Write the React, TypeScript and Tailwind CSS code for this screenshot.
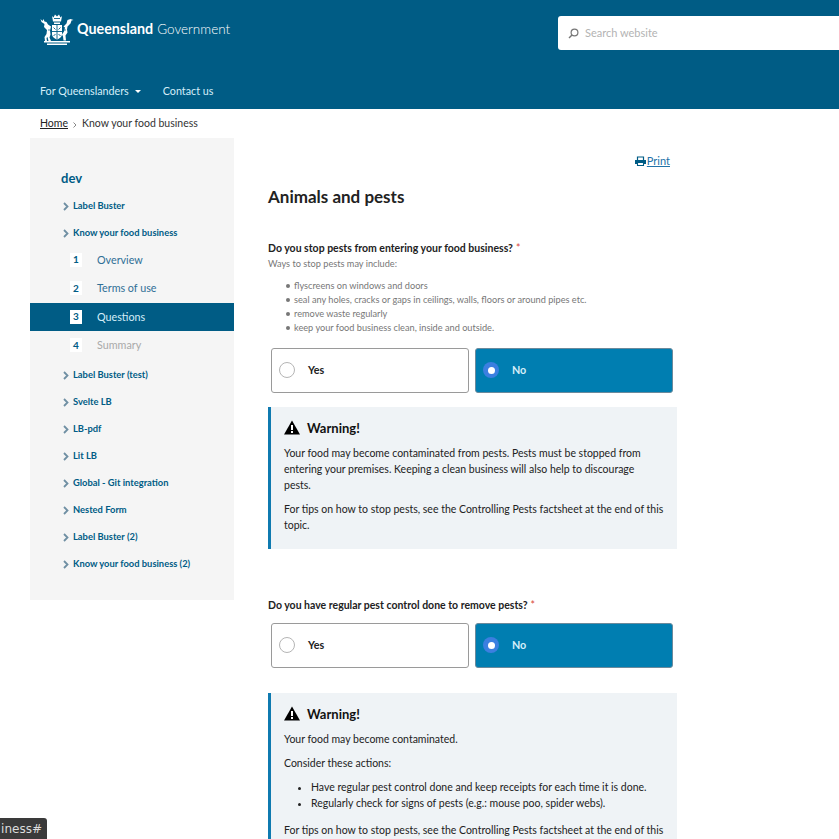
const sideTop = ["Label Buster", "Know your food business"];
const sideBottom = [
  "Label Buster (test)",
  "Svelte LB",
  "LB-pdf",
  "Lit LB",
  "Global - Git integration",
  "Nested Form",
  "Label Buster (2)",
  "Know your food business (2)",
];
const pestTips = [
  "flyscreens on windows and doors",
  "seal any holes, cracks or gaps in ceilings, walls, floors or around pipes etc.",
  "remove waste regularly",
  "keep your food business clean, inside and outside.",
];

function Crest() {
  return (
    <svg width="34" height="33" viewBox="0 0 34 33" fill="none" className="shrink-0">
      <g fill="#fff">
        {/* stag and brolga either side of the shield */}
        <path d="M0.500 6l2 2 1-2 1 2.500 2 .5 1.500 2.500 3 2-1 4 .5 4-1 3 1.500 3.500H8.500l-1-4-1 1 .5 3H5l-.5-4 2-3 .5-4-3-3 .5-3-3-2z" />
        <path d="M33.500 7l-2 .5-1 3-3 3-.5 3 .5 3-2 3 .500 5h-2.500l-.5-4-1-2 2-3 1-4-1.500-1 3-3 1-3.500 3-1z" />
        {/* shield */}
        <path d="M12 12h10v9c0 3-2.500 4.500-5 5.500-2.500-1-5-2.500-5-5.500z" />
        {/* scroll */}
        <path d="M4 28h26v1.500H4zM7 30.500h20V32H7z" />
        {/* crown */}
        <path d="M12 3l1.500 1.500L15 1.500l2 2 2-2 1.500 3L22 3l-1 5.500h-8zM14 9.500h6V11h-6z" />
      </g>
      <g stroke="#005c85" strokeWidth="0.9">
        <path d="M17 12v14M12 18.500h10" />
        <path d="M13.500 14.500l2 2M20.500 14.500l-2 2M13.500 23l2-2M20.500 23l-2-2" />
        <path d="M14 5.500h6" />
      </g>
      <g fill="#005c85">
        <circle cx="9" cy="17" r="0.7" />
        <circle cx="25" cy="17" r="0.7" />
      </g>
    </svg>
  );
}

function SideLink({ label }: { label: string }) {
  return (
    <div className="flex h-[27px] items-center pl-[33px]">
      <svg width="6" height="9" viewBox="0 0 6 9" className="mr-[4px] shrink-0">
        <path d="M1 1l3.500 3.500L1 8" stroke="#6f8fa3" strokeWidth="1.800" fill="none" />
      </svg>
      <span className="text-[9.35px] font-bold text-[#005c85]">{label}</span>
    </div>
  );
}

function Step({ n, label, state }: { n: number; label: string; state?: "active" | "off" }) {
  const active = state === "active";
  const off = state === "off";
  return (
    <div className={`flex h-[28.5px] items-center pl-[40px] ${active ? "bg-[#005c85]" : ""}`}>
      <span className="flex h-[14px] w-[12px] items-center justify-center bg-white text-[10px] font-bold text-[#005c85]">
        {n}
      </span>
      <span
        className={`ml-[15px] text-[10.75px] ${active ? "text-[#d5eef9]" : off ? "text-[#a9a9a9]" : "text-[#2f6f96]"}`}
      >
        {label}
      </span>
    </div>
  );
}

function Choice({ label, on }: { label: string; on?: boolean }) {
  return (
    <div
      className={`flex h-[45px] flex-1 items-center rounded-[3px] border pl-[7px] ${
        on ? "border-[#6b8a9c] bg-[#007eb1]" : "border-[#9a9a9a] bg-white"
      }`}
    >
      {on ? (
        <span className="flex h-[16px] w-[16px] items-center justify-center rounded-full bg-[#3b7fe0]">
          <span className="h-[7px] w-[7px] rounded-full bg-white" />
        </span>
      ) : (
        <span className="h-[16px] w-[16px] rounded-full border border-[#b5b5b5] bg-white" />
      )}
      <span className={`ml-[13px] mt-[1px] text-[10.75px] font-bold ${on ? "text-[#d5eef9]" : "text-[#222]"}`}>
        {label}
      </span>
    </div>
  );
}

function Question({ text }: { text: string }) {
  return (
    <p className="text-[10.5px] font-bold leading-[16px] text-[#222]">
      {text}
      <span className="ml-[3px] font-normal text-[#d9483b]">*</span>
    </p>
  );
}

function WarnTitle() {
  return (
    <div className="flex h-[16px] items-center gap-[7px]">
      <svg width="16" height="15" viewBox="0 0 16 15" className="shrink-0">
        <path d="M8 0.500L16 14.500H0z" fill="#000" />
        <rect x="7" y="5" width="2" height="5" fill="#fff" />
        <rect x="7" y="11" width="2" height="2" fill="#fff" />
      </svg>
      <span className="text-[13px] font-bold text-[#111]">Warning!</span>
    </div>
  );
}

export default function App() {
  return (
    <div className="relative h-[839px] overflow-hidden bg-white font-['Lato',sans-serif]">
      <header className="h-[109px] bg-[#005c85]">
        <div className="flex h-[66px] items-start justify-between pl-[40px]">
          <div className="mt-[13px] flex items-center">
            <Crest />
            <span className="mb-[3px] ml-[3px] text-white">
              <b className="text-[14.3px] font-bold">Queensland</b>{" "}
              <span className="text-[13.5px] font-light">Government</span>
            </span>
          </div>
          <div className="mt-[16px] flex h-[34px] w-[281px] items-center rounded-l-[3px] bg-white pl-[10px]">
            <svg width="11" height="11" viewBox="0 0 11 11" fill="none" className="shrink-0">
              <circle cx="6.500" cy="4.500" r="3.400" stroke="#777" strokeWidth="1.200" />
              <path d="M4 7L1 10" stroke="#777" strokeWidth="1.400" />
            </svg>
            <span className="ml-[6px] text-[11px] text-[#b3b3b3]">Search website</span>
          </div>
        </div>
        <nav className="flex items-center pl-[40px] pt-[17px] text-[10.75px] text-[#d5eef9]">
          <span>For Queenslanders</span>
          <span className="ml-[6px] mt-[1px] h-0 w-0 border-x-[3px] border-t-[3px] border-x-transparent border-t-white" />
          <span className="ml-[22px]">Contact us</span>
        </nav>
      </header>

      <div className="flex h-[29px] items-center pl-[40px] text-[10.5px] text-[#333]">
        <span className="text-[#222] underline">Home</span>
        <svg width="4" height="6" viewBox="0 0 4 6" className="mx-[5px] mt-[2px] shrink-0">
          <path d="M0.500 0.500L3 3L0.500 5.500" stroke="#888" fill="none" />
        </svg>
        <span>Know your food business</span>
      </div>

      <div className="flex items-start">
        <aside className="ml-[30px] h-[462px] w-[204px] shrink-0 bg-[#f5f5f5] pt-[31px]">
          <p className="mb-[4px] pl-[31px] text-[13px] font-bold text-[#005c85]">dev</p>
          {sideTop.map((s) => (
            <SideLink key={s} label={s} />
          ))}
          <div className="-mt-[1px]">
            <Step n={1} label="Overview" />
            <Step n={2} label="Terms of use" />
            <Step n={3} label="Questions" state="active" />
            <Step n={4} label="Summary" state="off" />
          </div>
          <div className="mt-[2px]">
            {sideBottom.map((s) => (
              <SideLink key={s} label={s} />
            ))}
          </div>
        </aside>

        <main className="ml-[34px] w-[409px] shrink-0">
          <div className="flex items-center justify-end pr-[7px] pt-[15px] text-[11px] text-[#2272a8]">
            <svg width="11" height="10" viewBox="0 0 11 10" className="shrink-0">
              <path d="M2.500 4V1h6v3" fill="none" stroke="#005c85" strokeWidth="1.200" />
              <path d="M0 4h11v4H9V6.500H2V8H0z" fill="#005c85" />
              <path d="M2.500 6.500h6v3h-6z" fill="none" stroke="#005c85" strokeWidth="1.100" />
            </svg>
            <span className="ml-[1px] underline">Print</span>
          </div>
          <h1 className="mt-[15px] text-[17px] font-bold leading-[24px] text-[#222]">Animals and pests</h1>

          <div className="mt-[31px]">
            <Question text="Do you stop pests from entering your food business?" />
            <p className="mt-[1px] text-[9.2px] leading-[14px] text-[#777]">Ways to stop pests may include:</p>
            <ul className="mt-[8px] text-[9.2px] leading-[14px] text-[#777]">
              {pestTips.map((t) => (
                <li key={t} className="flex items-center pl-[18px]">
                  <span className="mr-[4px] h-[4px] w-[4px] shrink-0 rounded-full bg-[#777]" />
                  {t}
                </li>
              ))}
            </ul>
            <div className="mt-[13px] flex gap-[6px] pl-[3px] pr-[4px]">
              <Choice label="Yes" />
              <Choice label="No" on />
            </div>
          </div>

          <section className="mt-[14px] border-l-[3px] border-[#0f7ab0] bg-[#eff3f6] pb-[16px] pl-[13px] pr-[12px] pt-[13px] text-[10.5px] leading-[16px] text-[#222]">
            <WarnTitle />
            <p className="mt-[9px]">
              Your food may become contaminated from pests. Pests must be stopped from entering your premises. Keeping a
              clean business will also help to discourage
              <br />
              pests.
            </p>
            <p className="mt-[8px]">
              For tips on how to stop pests, see the Controlling Pests factsheet at the end of this topic.
            </p>
          </section>

          <div className="mt-[48px]">
            <Question text="Do you have regular pest control done to remove pests?" />
            <div className="mt-[10px] flex gap-[6px] pl-[3px] pr-[4px]">
              <Choice label="Yes" />
              <Choice label="No" on />
            </div>
          </div>

          <section className="mt-[25px] border-l-[3px] border-[#0f7ab0] bg-[#eff3f6] pb-[16px] pl-[13px] pr-[12px] pt-[13px] text-[10.5px] leading-[16px] text-[#222]">
            <WarnTitle />
            <p className="mt-[9px]">Your food may become contaminated.</p>
            <p className="mt-[8px]">Consider these actions:</p>
            <ul className="mt-[8px] list-disc pl-[27px]">
              <li>Have regular pest control done and keep receipts for each time it is done.</li>
              <li>Regularly check for signs of pests (e.g.: mouse poo, spider webs).</li>
            </ul>
            <p className="mt-[11px]">
              For tips on how to stop pests, see the Controlling Pests factsheet at the end of this topic.
            </p>
          </section>
        </main>
      </div>

      <div className="absolute bottom-0 left-0 flex h-[21px] w-[47px] items-center justify-end rounded-tr-[3px] bg-[#3a3a3a] pr-[5px] font-['DejaVu_Sans',sans-serif] text-[12px] text-[#ddd]">
        iness#
      </div>
    </div>
  );
}
